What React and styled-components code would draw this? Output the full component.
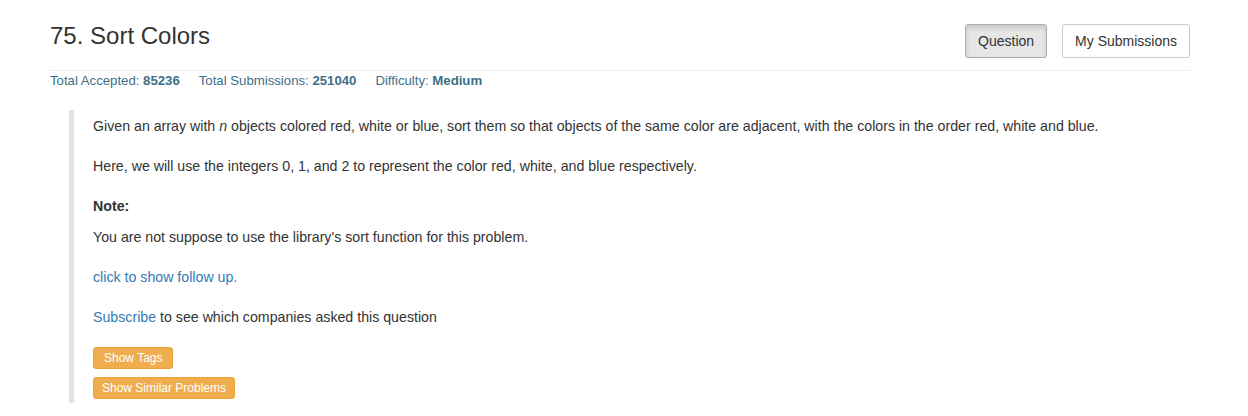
import React from "react";
import styled, { createGlobalStyle } from "styled-components";

const GlobalStyle = createGlobalStyle`
  body {
    margin: 0;
    background: #fff;
    font-family: Arial, "Liberation Sans", sans-serif;
    color: #333;
  }
`;

const Container = styled.div`
  width: 1140px;
  margin-left: 50px;
`;

const Header = styled.div`
  display: flex;
  justify-content: space-between;
  align-items: flex-start;
  padding: 24px 0 12px;
  border-bottom: 1px solid #eee;
`;

const Title = styled.h3`
  margin: -1px 0 0;
  font-size: 24px;
  line-height: 26px;
  font-weight: 400;
  color: #333;
`;

const Tabs = styled.div`
  display: flex;
  gap: 15px;
`;

const TabButton = styled.button`
  height: 34px;
  padding: 0 12px;
  font-family: inherit;
  font-size: 14px;
  color: #333;
  border-radius: 3px;
  border: 1px solid ${(p) => (p.$active ? "#adadad" : "#ccc")};
  background: ${(p) => (p.$active ? "#e6e6e6" : "#fff")};
  box-shadow: ${(p) => (p.$active ? "inset 0 3px 5px rgba(0,0,0,0.125)" : "none")};
`;

const Stats = styled.div`
  display: flex;
  gap: 19px;
  padding-top: 0;
  font-size: 13.2px;
  line-height: 20px;
  color: #3d6f88;
`;

const Stat = styled.span`
  b {
    font-weight: 700;
  }
`;

const Quote = styled.blockquote`
  margin: 19px 0 0 19px;
  padding: 6px 20px 4px 19px;
  border-left: 5px solid #e3e3e3;
  font-size: 14.2px;
  line-height: 20px;
`;

const Para = styled.p`
  margin: 0 0 ${(p) => (p.$tight ? "11px" : "20px")};
  color: #333;
`;

const Link = styled.a`
  color: #337ab7;
  text-decoration: none;
`;

const ButtonStack = styled.div`
  display: flex;
  flex-direction: column;
  align-items: flex-start;
  gap: 8px;
`;

const WarnButton = styled.button`
  height: 22px;
  padding: 0 ${(p) => (p.$wide ? "8px" : "10px")};
  font-family: inherit;
  font-size: 12px;
  color: #fff;
  background: #f0ad4e;
  border: 1px solid #eea236;
  border-radius: 3px;
`;

export default function App() {
  return (
    <Container>
      <GlobalStyle />
      <Header>
        <Title>75. Sort Colors</Title>
        <Tabs>
          <TabButton $active>Question</TabButton>
          <TabButton>My Submissions</TabButton>
        </Tabs>
      </Header>
      <Stats>
        <Stat>
          Total Accepted: <b>85236</b>
        </Stat>
        <Stat>
          Total Submissions: <b>251040</b>
        </Stat>
        <Stat>
          Difficulty: <b>Medium</b>
        </Stat>
      </Stats>
      <Quote>
        <Para>
          Given an array with <i>n</i> objects colored red, white or blue, sort
          them so that objects of the same color are adjacent, with the colors
          in the order red, white and blue.
        </Para>
        <Para>
          Here, we will use the integers 0, 1, and 2 to represent the color
          red, white, and blue respectively.
        </Para>
        <Para $tight>
          <b>Note:</b>
        </Para>
        <Para>You are not suppose to use the library's sort function for this problem.</Para>
        <Para>
          <Link href="#">click to show follow up.</Link>
        </Para>
        <Para>
          <Link href="#">Subscribe</Link> to see which companies asked this
          question
        </Para>
        <ButtonStack>
          <WarnButton>Show Tags</WarnButton>
          <WarnButton $wide>Show Similar Problems</WarnButton>
        </ButtonStack>
      </Quote>
    </Container>
  );
}
